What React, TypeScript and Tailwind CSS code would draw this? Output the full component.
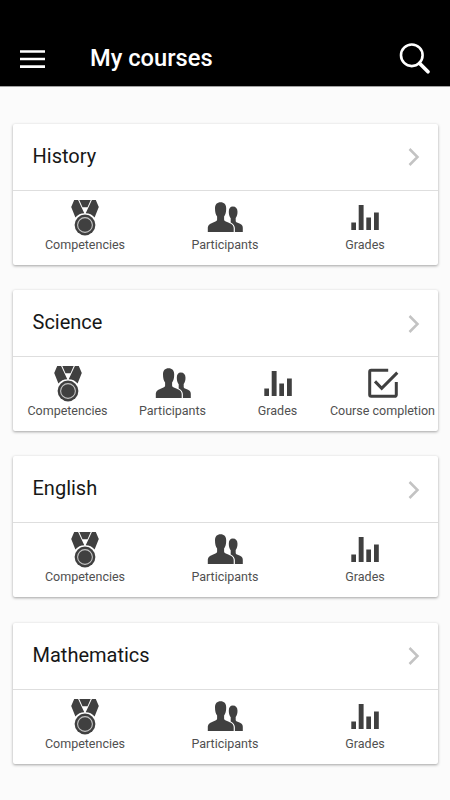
import { ReactNode } from "react"

type Feature = "competencies" | "participants" | "grades" | "completion"

const base: Feature[] = ["competencies", "participants", "grades"]

const courses: { name: string; features: Feature[] }[] = [
  { name: "History", features: base },
  { name: "Science", features: [...base, "completion"] },
  { name: "English", features: base },
  { name: "Mathematics", features: base },
]

const features: Record<Feature, { label: string; icon: ReactNode }> = {
  competencies: {
    label: "Competencies",
    icon: (
      <>
        <path d="M9.2 2h3.9l6.2 13.2a12 12 0 0 0-8.9 4.2L6.2 9z" />
        <path d="M30.8 2h-3.9l-6.2 13.2a12 12 0 0 1 8.9 4.2L33.8 9z" />
        <path d="M14.3 2h11.4l-3.2 7.2h-5z" />
        <circle cx="20" cy="27" r="10.4" />
        <circle cx="20" cy="27" r="7.4" fill="none" stroke="#c4c4c4" strokeWidth="1.1" />
      </>
    ),
  },
  participants: {
    label: "Participants",
    icon: (
      <>
        <path d="M27.8 8.5c3 0 4.7 2 4.7 5.2 0 2.7-.6 4.8-1.8 6.2v3c0 .9.7 1.3 2 1.8 3.6 1.4 5.1 2.3 5.1 5V34h-8.2v-3.6c0-3-1.5-4.1-4.3-5.3.3-.5.4-1 .4-1.9v-3c-1.2-1.4-1.9-3.8-1.9-6.5 0-3.2 1.4-5.2 4-5.2z" />
        <path
          d="M15.6 4.2c3.6 0 5.6 2.2 5.6 6.2 0 3.5-.7 6.3-2.1 8v3c0 1.2.7 1.7 2.3 2.3 5.3 2 7.3 3.3 7.3 6.6V34H2.8v-3.7c0-3.3 2-4.6 7.1-6.6 1.6-.6 2.2-1.1 2.2-2.3v-3c-1.4-1.7-2.1-4.5-2.1-8 0-4 2-6.2 5.6-6.2z"
          stroke="#fff"
          strokeWidth="2"
          paintOrder="stroke"
        />
      </>
    ),
  },
  grades: {
    label: "Grades",
    icon: <path d="M6.3 24.6H11V32H6.3zM13.7 7h4.9v25h-4.9zM21.3 19.4H26V32h-4.7zM29 14.6h4.8V32H29z" />,
  },
  completion: {
    label: "Course completion",
    icon: (
      <g fill="none" stroke="#404040" strokeWidth="3">
        <path d="M25.2 6.3H8.2a1.5 1.5 0 0 0-1.5 1.5v23a1.5 1.5 0 0 0 1.5 1.5h23.6a1.5 1.5 0 0 0 1.5-1.5V18" />
        <path d="M12 17.4l6.7 6.9L34.3 8.6" />
      </g>
    ),
  },
}

function Header() {
  return (
    <header className="flex h-[87px] items-end border-b border-neutral-400 bg-black pr-[19px] pb-2.5 pl-5 text-white">
      <button aria-label="Menu" className="mb-[7px]">
        <svg width="25" height="19" viewBox="0 0 25 19" fill="currentColor">
          <path d="M0 .2h25v2.6H0zM0 7.7h25v2.6H0zM0 15.3h25v2.6H0z" />
        </svg>
      </button>
      <h1 className="mb-px ml-[45px] flex-1 text-[23.7px] leading-[34px] font-medium">My courses</h1>
      <button aria-label="Search" className="mb-px">
        <svg width="32" height="32" viewBox="0 0 32 32" fill="none" stroke="currentColor">
          <circle cx="12.8" cy="12.3" r="10.8" strokeWidth="2.6" />
          <path d="M20.5 20.2l8.5 8.6" strokeWidth="3.7" strokeLinecap="round" />
        </svg>
      </button>
    </header>
  )
}

function CourseCard({ name, items }: { name: string; items: Feature[] }) {
  return (
    <section className="h-[141px] rounded-[2px] bg-white shadow-[0_1px_3px_rgba(0,0,0,0.36)]">
      <div className="flex h-[67px] items-center justify-between border-b border-[#dedede] pr-[18px] pl-5">
        <h2 className="pb-0.5 text-[20px] leading-6 text-neutral-900">{name}</h2>
        <svg width="12" height="18" viewBox="0 0 12 18" fill="none" stroke="#c3c3c3" strokeWidth="2.5" className="mt-px">
          <path d="M1.5 1l8 8-8 8" />
        </svg>
      </div>
      <div className="flex px-[2.5px] pt-[7px]">
        {items.map((item) => (
          <div key={item} className="flex min-w-0 flex-1 flex-col items-center">
            <svg width="40" height="40" viewBox="0 0 40 40" fill="#404040">
              {features[item].icon}
            </svg>
            <span className="-mt-px text-[12.5px] leading-4 whitespace-nowrap text-[#505050]">
              {features[item].label}
            </span>
          </div>
        ))}
      </div>
    </section>
  )
}

export default function App() {
  return (
    <div className="h-[800px] w-[450px] overflow-hidden bg-[#fbfbfb] font-[Roboto,sans-serif]">
      <Header />
      <main className="flex flex-col gap-[25.3px] px-[12.5px] pt-[36.9px]">
        {courses.map((course) => (
          <CourseCard key={course.name} name={course.name} items={course.features} />
        ))}
      </main>
    </div>
  )
}
